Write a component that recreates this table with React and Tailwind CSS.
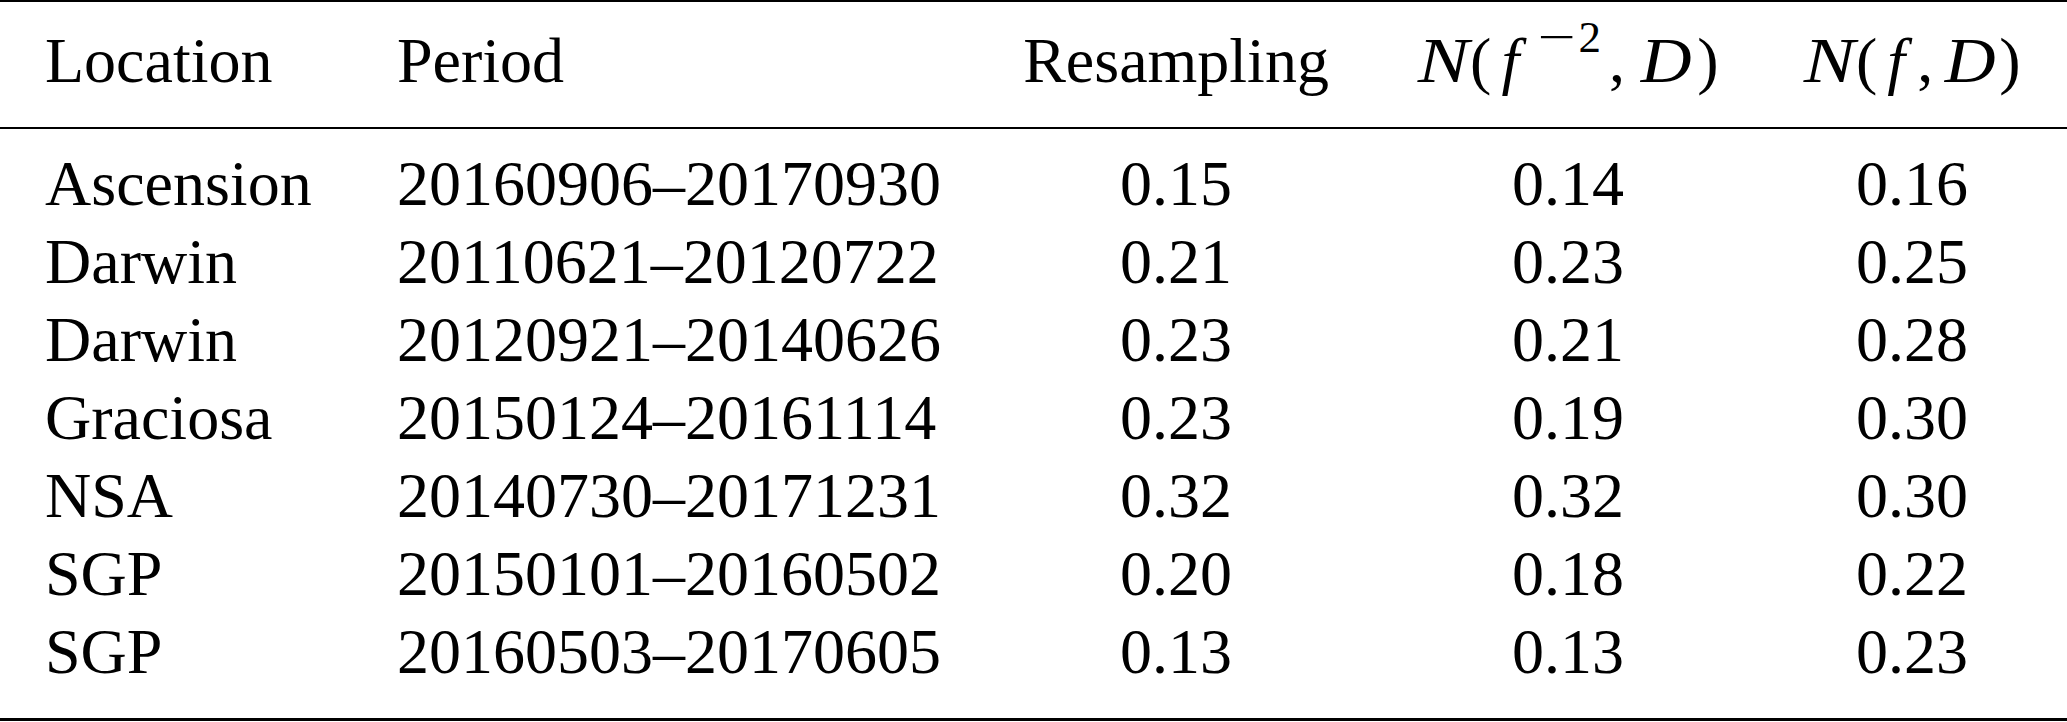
import React from 'react'

const rows = [
  ['Ascension', '20160906–20170930', '0.15', '0.14', '0.16'],
  ['Darwin', '20110621–20120722', '0.21', '0.23', '0.25'],
  ['Darwin', '20120921–20140626', '0.23', '0.21', '0.28'],
  ['Graciosa', '20150124–20161114', '0.23', '0.19', '0.30'],
  ['NSA', '20140730–20171231', '0.32', '0.32', '0.30'],
  ['SGP', '20150101–20160502', '0.20', '0.18', '0.22'],
  ['SGP', '20160503–20170605', '0.13', '0.13', '0.23'],
]

const grid = 'grid grid-cols-[352px_633px_382px_402px_286px_1fr]'

const App = () => {
  return (
    <div
      className="w-[2067px] h-[722px] bg-white text-black text-[64px] leading-[78px]"
      style={{ fontFamily: '"Liberation Serif", "Times New Roman", serif' }}
    >
      <div className="h-[2px] bg-black" />

      {/* header */}
      <div className={`${grid} pt-[20px] pb-[27px]`}>
        <div className="pl-[45px] whitespace-nowrap">Location</div>
        <div className="pl-[45px] whitespace-nowrap">Period</div>
        <div className="text-center whitespace-nowrap">Resampling</div>
        <div className="text-center whitespace-nowrap">
          <i className="inline-block scale-x-[1.2] mx-[5px]">N</i>(<i className="ml-[10px] mr-[16px]">f</i>
          <span className="relative -top-[30px] text-[45px] leading-none">
            <span className="inline-block scale-x-[1.5] mx-[9px]">−</span>2
          </span>
          <span className="ml-[8px]">,</span>
          <i className="inline-block scale-x-[1.1] ml-[18px] mr-[8px]">D</i>)
        </div>
        <div className="text-center whitespace-nowrap">
          <i className="inline-block scale-x-[1.2] mx-[5px]">N</i>(<i className="ml-[10px] mr-[12px]">f</i>,
          <i className="inline-block scale-x-[1.1] ml-[14px] mr-[6px]">D</i>)
        </div>
        <div />
      </div>

      <div className="h-[2px] bg-black" />

      {/* body */}
      <div className="pt-[16px] pb-[27px]">
        {rows.map((r, i) => (
          <div key={i} className={grid}>
            <div className="pl-[45px] whitespace-nowrap">{r[0]}</div>
            <div className="pl-[45px] whitespace-nowrap">{r[1]}</div>
            <div className="text-center">{r[2]}</div>
            <div className="text-center">{r[3]}</div>
            <div className="text-center">{r[4]}</div>
            <div />
          </div>
        ))}
      </div>

      <div className="h-[3px] bg-black" />
    </div>
  )
}

export default App
